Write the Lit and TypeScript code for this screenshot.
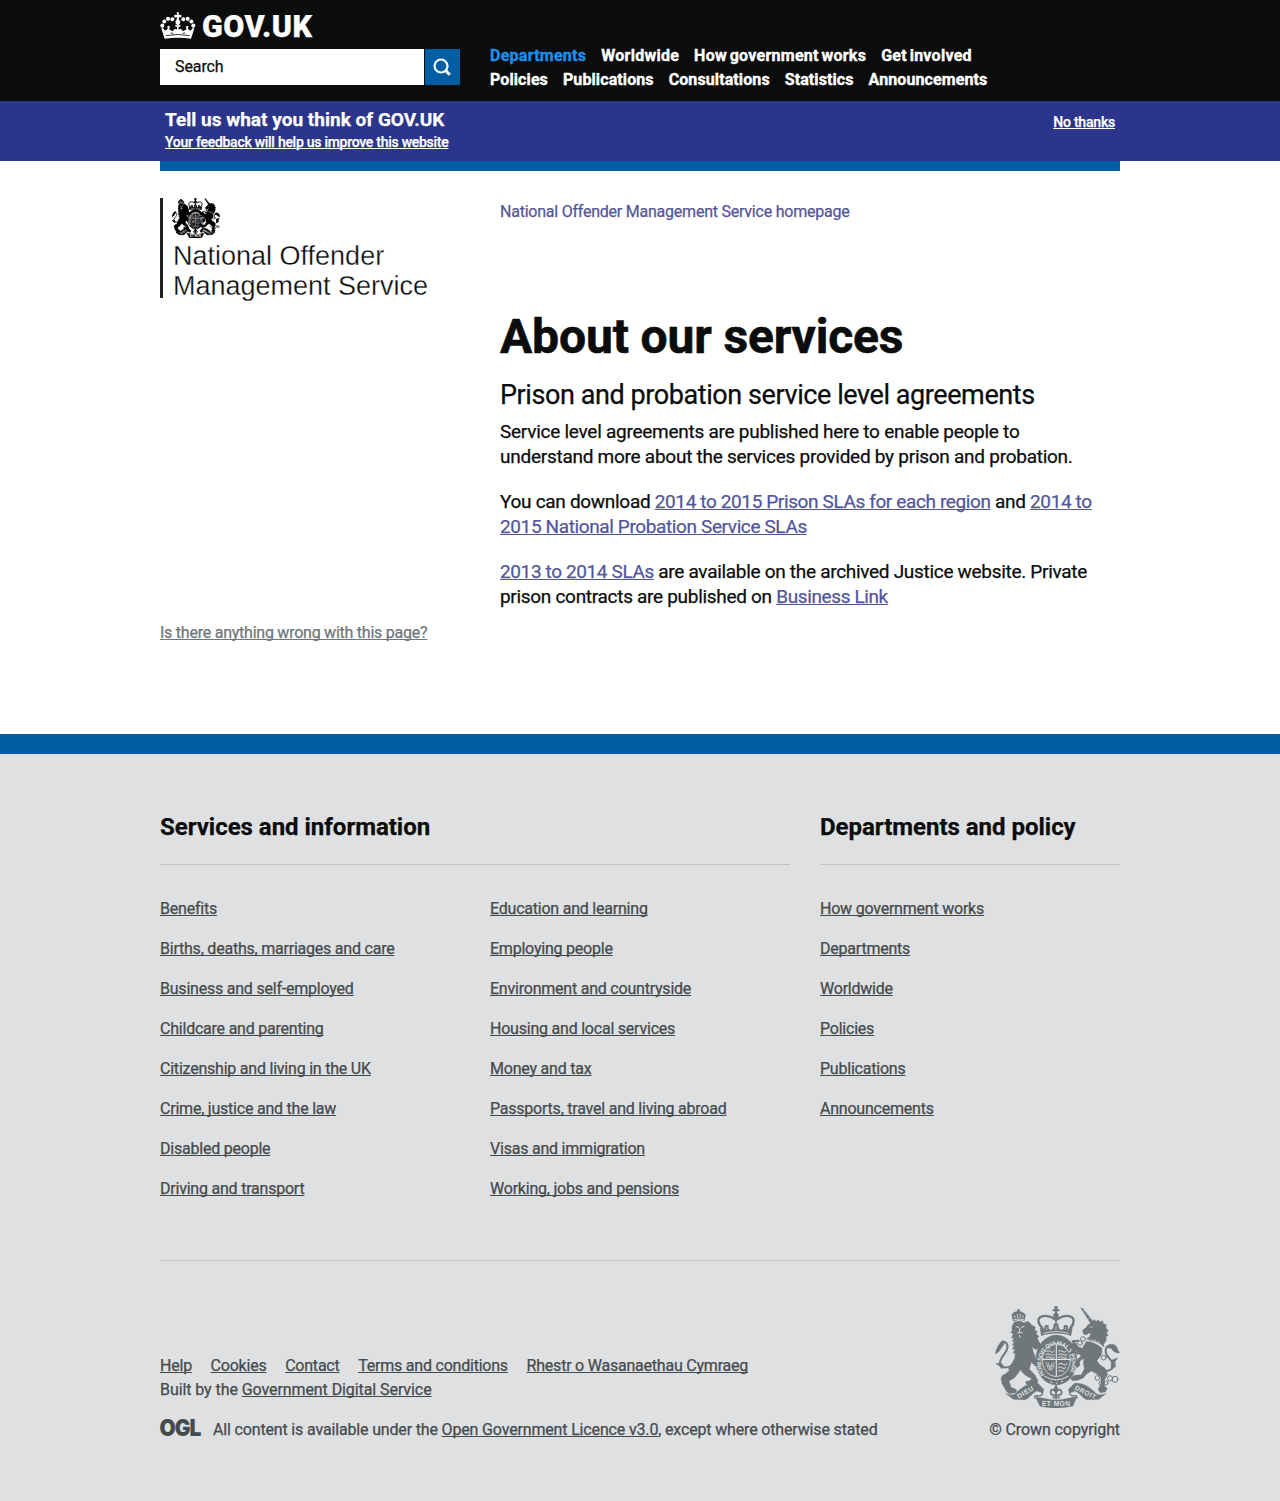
import { LitElement, html, css, svg } from "lit";
import { customElement, property } from "lit/decorators.js";

const NAV = [
  ["Departments", "Worldwide", "How government works", "Get involved"],
  ["Policies", "Publications", "Consultations", "Statistics", "Announcements"],
];

const SERVICES = [
  [
    "Benefits",
    "Births, deaths, marriages and care",
    "Business and self-employed",
    "Childcare and parenting",
    "Citizenship and living in the UK",
    "Crime, justice and the law",
    "Disabled people",
    "Driving and transport",
  ],
  [
    "Education and learning",
    "Employing people",
    "Environment and countryside",
    "Housing and local services",
    "Money and tax",
    "Passports, travel and living abroad",
    "Visas and immigration",
    "Working, jobs and pensions",
  ],
];

const POLICY = ["How government works", "Departments", "Worldwide", "Policies", "Publications", "Announcements"];

const META = ["Help", "Cookies", "Contact", "Terms and conditions", "Rhestr o Wasanaethau Cymraeg"];

/** Royal coat of arms; the inks come from --ink and --paper, --bold thickens it for small sizes. */
@customElement("royal-arms")
export class RoyalArms extends LitElement {
  static styles = css`
    :host { display: block; -webkit-text-stroke: 0; letter-spacing: 0; }
    svg { display: block; width: 100%; height: 100%; }
    .ink { fill: var(--ink); stroke: var(--ink); stroke-width: var(--bold, 1); stroke-linejoin: round; }
    .line { fill: none; stroke: var(--ink); stroke-linecap: round; stroke-linejoin: round; }
    .cut { fill: none; stroke: var(--paper); stroke-linecap: round; }
    .motto { fill: var(--paper); font: 700 20px "Liberation Sans", Arial, sans-serif; }
    .garter { font-size: 18px; }
  `;

  render() {
    return html`<svg viewBox="45 33 375 306" preserveAspectRatio="none" aria-label="Royal coat of arms">
      <!-- lion -->
      <path class="line" stroke-width="6" d="M101 205C88 220 66 222 61 206C56 190 78 178 82 160C85 144 74 137 64 144"/>
      <path class="ink" d="M70 136C60 140 48 160 46 177C56 172 61 166 64 158C70 154 75 146 70 136Z"/>
      <path class="ink" d="M60 203L48 206L58 213L66 222L69 209Z"/>
      <path class="ink" d="M104 80C96 90 94 99 97 106L92 114L99 114L98 122L94 130L103 129L96 140L104 138L96 152L104 149L97 163L105 162L99 175L106 174L104 190C101 198 94 203 93 214L84 222L90 224L76 237L68 240L63 250L66 266L79 289L88 296L107 293L111 287L103 280L94 278L87 258L103 249L113 236L122 224C129 237 140 245 155 250L149 258L137 259L139 268L157 272L170 271L174 257L165 240L148 222L154 202L163 211L174 217L178 203L168 194L165 184L159 168L157 155L166 164L176 160L182 149L176 138L172 130L177 124L168 116L173 110L164 105L166 96L156 91L150 84L144 79L132 83L120 78Z"/>
      <path class="cut" stroke-width="3" d="M109 95L116 97M125 97L132 94M120 100L118 110M113 114L126 113M119 122L121 127"/>
      <path class="ink" d="M99 78L95 59L102 52L116 48L130 53L137 60L133 77C122 73 110 74 99 78Z"/>
      <circle class="ink" cx="116" cy="47" r="4"/>
      <path class="cut" stroke-width="2.5" d="M103 62L105 68M112 58L113 67M121 58L120 67M130 62L128 68M101 74Q116 69 131 74"/>

      <!-- crown -->
      <path class="line" stroke-width="7" d="M188 101C173 86 170 69 186 64C202 59 217 67 228 75C240 67 255 59 270 64C286 69 283 87 270 101"/>
      <path class="line" stroke-width="6" stroke-dasharray="1 6" d="M228 75V101"/>
      <path class="line" stroke-width="6" d="M228 38V62M220 46H236"/>
      <circle class="ink" cx="228" cy="62" r="8"/>
      <circle class="ink" cx="228" cy="38" r="5"/>
      <path class="ink" d="M184 122L180 99L192 105L195 91L205 91L206 102L212 105L219 101L222 86L234 86L237 101L245 105L251 102L252 91L262 91L265 105L277 99L273 122C251 112 207 112 184 122Z"/>
      <path class="cut" stroke-width="2.5" d="M191 115Q228 104 266 115"/>
      <path class="cut" stroke-width="2" d="M200 98V104M228 93V104M257 98V104"/>

      <!-- garter and shield -->
      <ellipse class="ink" cx="229" cy="195" rx="62" ry="75"/>
      <ellipse class="cut" stroke-width="2.5" cx="229" cy="195" rx="42" ry="50"/>
      <path id="garter" fill="none" d="M194 240A46 55 0 1 1 266 240"/>
      <text class="motto garter"><textPath href="#garter" textLength="222" lengthAdjust="spacing">HONI SOIT QUI MAL Y PENSE</textPath></text>
      <path class="cut" stroke-width="3.5" d="M229 148V242M188 193H270"/>
      <path class="cut" stroke-width="3" d="M198 169Q205 164 211 170T222 168M197 178Q204 174 211 179T223 178M199 187Q207 182 213 188T222 186M236 168Q243 164 249 170T258 168M236 178Q243 174 250 179T261 178M236 187Q245 182 250 188T260 186M236 207Q243 202 250 208T261 206M235 217Q242 213 248 219T257 217M236 228Q241 223 250 229"/>
      <path class="cut" stroke-width="2" d="M199 203L205 222Q210 229 218 222L222 203M205 204L211 224M216 204L211 224M202 213H220"/>
      <path class="cut" stroke-width="3" d="M194 244Q229 266 264 244M212 261L216 262M229 264H231M244 261L248 259"/>

      <!-- unicorn -->
      <path class="ink" d="M302 38L308 40L343 84L335 91Z"/>
      <path class="cut" stroke-width="1.5" d="M310 49L312 46M317 60L321 56M325 73L329 68"/>
      <path class="ink" d="M335 83L343 73L348 80L356 74L359 81L368 77L370 86L379 89L378 98L385 107L380 112L384 123L378 124L379 136L369 151C357 141 342 137 329 138L325 130L333 117L328 114L318 120L310 117L308 105L318 98L324 89Z"/>
      <path class="cut" stroke-width="2" d="M330 96L337 97"/>
      <path class="line" stroke-width="5" d="M323 131Q350 132 371 153"/>
      <path class="cut" stroke-width="2" d="M328 137L333 132L338 139L344 134L349 143L355 139L360 149"/>
      <path class="ink" d="M319 139C336 141 354 148 366 160L365 178L351 197L358 208L374 219L383 238L374 254L373 273L382 280L376 291L360 293L354 283L362 270L363 247L347 235L334 228L319 238L310 249L293 256L276 257L272 248L283 241L304 239L313 221L310 203L312 190L299 199L300 211L291 218L284 208L290 195L303 183L293 171L276 162L270 153L279 143L289 144L290 154L307 160Z"/>
      <path class="line" stroke-width="6" d="M296 176L279 170L267 176M291 154L278 139L294 137"/>
      <path class="line" stroke-width="6" d="M374 226C393 231 406 215 397 201C388 188 375 182 377 165C380 150 395 148 407 160"/>
      <path class="ink" d="M380 157C383 147 397 144 407 152C414 158 413 168 419 173C410 176 399 170 395 161ZM394 196L413 188L405 201L407 216L393 220Z"/>
      <g class="line" stroke-width="3">
        <circle cx="309" cy="132" r="7"/><circle cx="300" cy="144" r="7"/><circle cx="371" cy="188" r="7"/>
        <circle cx="352" cy="249" r="7"/><circle cx="364" cy="265" r="7"/><circle cx="378" cy="264" r="6"/><circle cx="390" cy="250" r="8"/><circle cx="405" cy="253" r="9"/>
      </g>

      <!-- thistle and ribbon -->
      <path class="line" stroke-width="5" d="M228 274V311M228 291Q212 275 212 294Q214 302 224 300M228 291Q244 275 245 294Q243 302 232 300M219 307H238"/>
      <path class="ink" d="M228 269L236 284L228 296L220 284Z"/>
      <path class="ink" d="M76 295C93 302 103 301 112 290C129 274 148 262 174 265L192 284L186 293L172 288C158 291 150 310 135 314L100 313Z"/>
      <path class="ink" d="M379 295C364 302 353 301 343 290C327 274 307 262 283 265L265 284L271 293L284 288C298 291 306 310 321 314L356 313Z"/>
      <path class="line" stroke-width="4" d="M188 284Q191 304 174 303Q163 299 164 309M268 284Q267 304 282 303Q292 299 291 309"/>
      <path class="ink" d="M166 305C178 309 185 307 192 310Q228 320 264 310L290 305L279 333Q228 345 180 334Z"/>
      <text class="motto" transform="translate(116 311) rotate(-30)" textLength="53">DIEU</text>
      <text class="motto" x="186" y="334" textLength="84">ET MON</text>
      <text class="motto" transform="translate(283 283) rotate(26)" textLength="68">DROIT</text>
    </svg>`;
  }
}

/** Titled group of footer links, set in one or more columns. */
@customElement("link-group")
export class LinkGroup extends LitElement {
  @property() heading = "";
  @property({ attribute: false }) columns: string[][] = [];

  static styles = css`
    :host { display: block; }
    .title {
      margin: 0; box-sizing: border-box; height: 57px; border-bottom: 1px solid #bfc1c3; line-height: 38px;
      font-size: 24px; font-weight: 700; letter-spacing: -0.02px; color: #0b0c0c;
    }
    .columns { display: grid; grid-auto-flow: column; grid-auto-columns: 300px; column-gap: 30px; padding-top: 34px; }
    .list { list-style: none; margin: 0; padding: 0; }
    .item { height: 40px; line-height: 20px; }
    .link { color: #454a4c; text-decoration: underline; text-underline-offset: 1px; text-decoration-thickness: 1px; text-decoration-skip-ink: none; }
  `;

  render() {
    return html`<h2 class="title">${this.heading}</h2>
      <div class="columns">
        ${this.columns.map(
          (col) => html`<ul class="list">
            ${col.map((t) => html`<li class="item"><a class="link">${t}</a></li>`)}
          </ul>`
        )}
      </div>`;
  }
}

@customElement("app-root")
export class AppRoot extends LitElement {
  static styles = css`
    :host {
      display: block; background: #fff; color: #0b0c0c;
      font: 400 16px/20px Roboto, "Liberation Sans", Arial, sans-serif;
      -webkit-text-stroke: 0.25px;
    }
    .wrap { width: 960px; margin: 0 auto; }
    .u { text-decoration: underline; text-underline-offset: 1px; text-decoration-thickness: 1px; text-decoration-skip-ink: none; }

    .header { background: #0b0c0c; height: 101px; }
    .header-grid { display: grid; grid-template-columns: 300px 1fr; column-gap: 30px; color: #fff; }
    .brand { display: flex; gap: 6px; height: 37px; padding-top: 12px; }
    .crown { width: 36px; height: 27px; fill: #fff; }
    .wordmark { font: 900 30.5px/29px Roboto, "Liberation Sans", sans-serif; letter-spacing: 0.5px; }
    .search { display: flex; gap: 1px; height: 36px; }
    .field { width: 264px; background: #fff; color: #0b0c0c; line-height: 36px; padding-left: 15px; box-sizing: border-box; letter-spacing: -0.1px; }
    .go { width: 35px; background: #005ea5; display: flex; align-items: center; justify-content: center; }
    .glass { width: 18px; height: 18px; margin-right: 1px; fill: none; stroke: #fff; stroke-width: 2.2; }
    .nav { padding-top: 44px; font-weight: 700; line-height: 24px; letter-spacing: 0.26px; word-spacing: -1.5px; }
    .nav-row { display: flex; gap: 15px; }
    .nav-row + .nav-row { letter-spacing: 0.1px; }
    .nav-link { color: #fff; white-space: nowrap; -webkit-text-stroke: 0.4px; }
    .current { color: #1d8feb; }

    .survey { background: #2b358c; height: 60px; color: #fff; }
    .survey-in { display: flex; justify-content: space-between; padding: 6px 5px 0; }
    .survey-title { font-size: 19px; font-weight: 700; line-height: 25px; letter-spacing: 0.02px; }
    .survey-link { font-size: 14px; line-height: 20px; font-weight: 500; letter-spacing: -0.27px; }
    .dismiss { font-size: 14px; line-height: 20px; font-weight: 500; letter-spacing: -0.2px; padding-top: 5px; }

    .main { height: 563px; border-top: 10px solid #005ea5; display: grid; grid-template-columns: 340px 1fr; grid-template-rows: 452px auto; }
    .side { padding-top: 27px; }
    .org { border-left: 3px solid #231f20; height: 100px; padding-left: 9px; }
    .arms { width: 48px; height: 40px; --ink: #000; --paper: #fff; --bold: 6; }
    .org-name { margin-top: 3px; font: 400 27px/30px "Liberation Sans", Arial, sans-serif; padding-left: 1px; white-space: nowrap; -webkit-text-stroke: 0.3px #fff; }
    .home { display: block; padding-top: 31px; color: #53569a; letter-spacing: -0.23px; }
    .title { font-size: 48px; line-height: 50px; font-weight: 700; margin: 90px 0 0; letter-spacing: -0.15px; -webkit-text-stroke: 0.6px; }
    .sub { font-size: 27px; line-height: 35px; font-weight: 400; margin: 16px 0 0; letter-spacing: -0.42px; }
    .text { font-size: 19px; line-height: 25px; margin: 0 0 20px; letter-spacing: -0.3px; }
    .lead { margin-top: 6px; letter-spacing: -0.26px; }
    .text .u { color: #53569a; letter-spacing: -0.38px; }
    .report { color: #6f777b; letter-spacing: -0.24px; }

    .footer { background: #dee0e2; border-top: 20px solid #005ea5; height: 767px; box-sizing: border-box; color: #454a4c; letter-spacing: -0.22px; }
    .groups { display: grid; grid-template-columns: 630px 300px; column-gap: 30px; padding-top: 54px; height: 452px; border-bottom: 1px solid #bfc1c3; }
    .meta { display: flex; justify-content: space-between; padding-top: 45px; }
    .legal { padding-top: 48px; line-height: 24px; }
    .meta-links { display: flex; gap: 18.7px; }
    .built { letter-spacing: -0.08px; }
    .licence { display: flex; gap: 12px; margin-top: 16px; letter-spacing: -0.16px; }
    .ogl { width: 41px; height: 18px; margin-top: 1px; fill: #454a4c; overflow: visible; font: 900 23px Inter, "Liberation Sans", sans-serif; letter-spacing: -1px; }
    .copyright { display: flex; flex-direction: column; align-items: flex-end; line-height: 24px; letter-spacing: -0.1px; }
    .footer-arms { width: 125px; height: 102px; margin-bottom: 10px; --ink: #6f777b; --paper: #dee0e2; }
  `;

  private crown() {
    const beads = [
      [37, 76, 6], [43, 64, 6], [54, 56, 6], [67, 57, 6], [100, 57, 6], [113, 56, 6], [124, 64, 6], [130, 76, 6],
    ];
    return html`<svg class="crown" viewBox="30 36 108 79" preserveAspectRatio="none" aria-hidden="true">
      ${beads.map(([x, y, r]) => svg`<circle cx=${x} cy=${y} r=${r} />`)}
      <path d="M80 37H87L86 45L94 44V52L86 51L87 59Q93 63 90 70L86 74H81L77 70Q74 63 80 59L81 51L73 52V44L81 45Z"/>
      <path d="M44 114L34 84L39 83L45 91L53 86L52 78Q55 74 59 78L58 87L68 92L74 86L81 87V79L76 79V73L81 75H86L91 73V79L86 79V87L93 86L99 92L109 87L108 78Q112 74 115 78L114 86L122 91L128 83L133 84L123 114Q84 108 44 114Z"/>
      <path fill="none" stroke="#0b0c0c" stroke-width="2.4" d="M48 105Q84 99 119 105M62 97L70 99M98 99L106 97"/>
    </svg>`;
  }

  render() {
    return html`
      <header class="header">
        <div class="wrap header-grid">
          <div>
            <div class="brand">${this.crown()}<span class="wordmark">GOV.UK</span></div>
            <div class="search">
              <div class="field">Search</div>
              <div class="go">
                <svg class="glass" viewBox="0 0 18 18"><circle cx="8" cy="8" r="6.5"/><path stroke-width="3" d="M12.3 12.3L16.8 16.8"/></svg>
              </div>
            </div>
          </div>
          <nav class="nav">
            ${NAV.map(
              (row, r) => html`<div class="nav-row">
                ${row.map((t, i) => html`<a class="nav-link ${r + i === 0 ? "current" : ""}">${t}</a>`)}
              </div>`
            )}
          </nav>
        </div>
      </header>
      <section class="survey">
        <div class="wrap">
          <div class="survey-in">
            <div>
              <div class="survey-title">Tell us what you think of GOV.UK</div>
              <a class="survey-link u">Your feedback will help us improve this website</a>
            </div>
            <a class="dismiss u">No thanks</a>
          </div>
        </div>
      </section>
      <main class="wrap main">
        <div class="side">
          <div class="org">
            <royal-arms class="arms"></royal-arms>
            <div class="org-name">National Offender<br />Management Service</div>
          </div>
        </div>
        <article>
          <a class="home">National Offender Management Service homepage</a>
          <h1 class="title">About our services</h1>
          <h2 class="sub">Prison and probation service level agreements</h2>
          <p class="text lead">Service level agreements are published here to enable people to<br />understand more about the services provided by prison and probation.</p>
          <p class="text">You can download <a class="u">2014 to 2015 Prison SLAs for each region</a> and <a class="u">2014 to<br />2015 National Probation Service SLAs</a></p>
          <p class="text"><a class="u">2013 to 2014 SLAs</a> are available on the archived Justice website. Private<br />prison contracts are published on <a class="u">Business Link</a></p>
        </article>
        <div><a class="report u">Is there anything wrong with this page?</a></div>
      </main>
      <footer class="footer">
        <div class="wrap">
          <div class="groups">
            <link-group heading="Services and information" .columns=${SERVICES}></link-group>
            <link-group heading="Departments and policy" .columns=${[POLICY]}></link-group>
          </div>
          <div class="meta">
            <div class="legal">
              <div class="meta-links">${META.map((t) => html`<a class="u">${t}</a>`)}</div>
              <div class="built">Built by the <a class="u">Government Digital Service</a></div>
              <div class="licence">
                <svg class="ogl" viewBox="0 0 41 18"><text x="-0.5" y="17.2" textLength="41" lengthAdjust="spacingAndGlyphs">OGL</text></svg>
                <span>All content is available under the <a class="u">Open Government Licence v3.0</a>, except where otherwise stated</span>
              </div>
            </div>
            <div class="copyright">
              <royal-arms class="footer-arms"></royal-arms>
              <span>© Crown copyright</span>
            </div>
          </div>
        </div>
      </footer>
    `;
  }
}
